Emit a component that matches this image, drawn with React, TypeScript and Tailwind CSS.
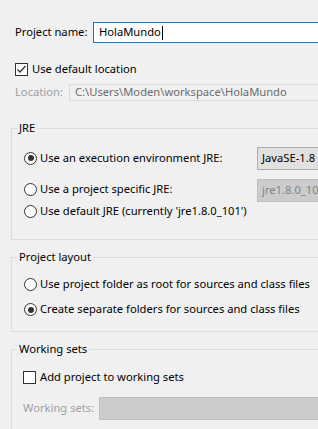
import React from "react";

function Radio({ checked }: { checked?: boolean }) {
  return (
    <span className="flex h-[13px] w-[13px] shrink-0 items-center justify-center rounded-full border border-[#333333] bg-white">
      {checked && <span className="h-[6px] w-[6px] rounded-full bg-[#333333]" />}
    </span>
  );
}

function Checkbox({ checked }: { checked?: boolean }) {
  return (
    <span className="flex h-[13px] w-[13px] shrink-0 items-center justify-center border border-[#333333] bg-white">
      {checked && (
        <svg width="11" height="11" viewBox="0 0 11 11">
          <path d="M1.5 5.5 L4 8 L9.5 2" fill="none" stroke="#333333" strokeWidth="1.3" />
        </svg>
      )}
    </span>
  );
}

function Group({ title, children, className }: { title: string; children: React.ReactNode; className?: string }) {
  return (
    <fieldset className="w-[360px] border border-[#dcdcdc]">
      <legend className="ml-[5px] px-[2px] leading-[16px] text-black">{title}</legend>
      <div className={className}>{children}</div>
    </fieldset>
  );
}

export default function App() {
  return (
    <div
      className="h-[429px] w-[318px] overflow-hidden whitespace-nowrap bg-[#f0f0f0] pl-[11px] pt-[22px] text-[11.2px] text-black"
      style={{ fontFamily: '"Noto Sans", "Open Sans", sans-serif' }}
    >
      {/* Project name */}
      <div className="flex h-[21px] items-center pl-[4px]">
        <span className="w-[78px] shrink-0">Project name:</span>
        <div className="flex h-[21px] w-[260px] shrink-0 items-center border border-[#0078d7] bg-white pl-[5px]">
          HolaMundo<span className="ml-[1px] h-[14px] w-px bg-black" />
        </div>
      </div>

      <label className="mt-[20px] flex h-[13px] items-center gap-[4px] pl-[4px]">
        <Checkbox checked />
        <span>Use default location</span>
      </label>

      <div className="mt-[8px] flex h-[17px] items-center pl-[4px]">
        <span className="w-[54px] shrink-0 text-[#a0a0a0]">Location:</span>
        <div className="flex h-[17px] w-[280px] shrink-0 items-center border border-[#d9d9d9] bg-[#f0f0f0] pl-[5px] text-[#6d6d6d]">
          C:\Users\Moden\workspace\HolaMundo
        </div>
      </div>

      {/* JRE */}
      <div className="mt-[19px]">
        <Group title="JRE" className="pb-[21px] pl-[12px]">
          <div className="mt-[11px] flex h-[23px] items-center">
            <label className="flex w-[233px] shrink-0 items-center gap-[3px]">
              <Radio checked />
              <span>Use an execution environment JRE:</span>
            </label>
            <div className="flex h-[23px] w-[100px] shrink-0 items-center border border-[#adadad] bg-[#e1e1e1] pl-[4px]">
              JavaSE-1.8
            </div>
          </div>
          <div className="mt-[9px] flex h-[23px] items-start">
            <label className="mt-[2px] flex w-[233px] shrink-0 items-center gap-[3px]">
              <Radio />
              <span>Use a project specific JRE:</span>
            </label>
            <div className="flex h-[23px] w-[100px] shrink-0 items-center border border-[#bfbfbf] bg-[#cccccc] pl-[4px] text-[#838383]">
              jre1.8.0_101
            </div>
          </div>
          <label className="mt-[3px] flex h-[13px] items-center gap-[3px]">
            <Radio />
            <span>Use default JRE (currently 'jre1.8.0_101')</span>
          </label>
        </Group>
      </div>

      {/* Project layout */}
      <div className="mt-[9px]">
        <Group title="Project layout" className="pb-[15px] pl-[12px]">
          <label className="mt-[13px] flex h-[13px] items-center gap-[3px]">
            <Radio />
            <span>Use project folder as root for sources and class files</span>
          </label>
          <label className="mt-[12px] flex h-[13px] items-center gap-[3px]">
            <Radio checked />
            <span>Create separate folders for sources and class files</span>
          </label>
        </Group>
      </div>

      {/* Working sets */}
      <div className="mt-[9px]">
        <Group title="Working sets" className="pb-[20px] pl-[11px]">
          <label className="mt-[14px] flex h-[13px] items-center gap-[4px]">
            <Checkbox />
            <span>Add project to working sets</span>
          </label>
          <div className="mt-[13px] flex h-[23px] items-center">
            <span className="w-[76px] shrink-0 text-[#a0a0a0]">Working sets:</span>
            <div className="h-[23px] w-[260px] shrink-0 border border-[#bfbfbf] bg-[#cccccc]" />
          </div>
        </Group>
      </div>
    </div>
  );
}
